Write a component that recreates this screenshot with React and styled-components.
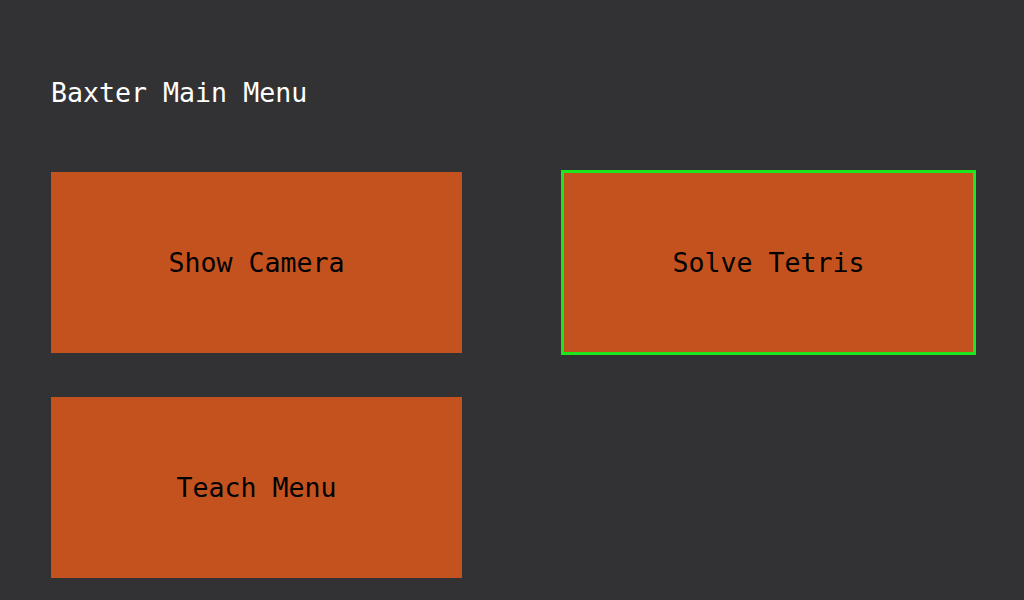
import { createGlobalStyle } from 'styled-components'
import styled from 'styled-components'

const GlobalStyle = createGlobalStyle`
    html, body {
        margin: 0;
        padding: 0;
        background: #323234;
    }
`

const Screen = styled.div`
    width: 1024px;
    height: 600px;
    box-sizing: border-box;
    padding: 80px 50px 0 51px;
    background: #323234;
    font-family: 'DejaVu Sans Mono', 'Liberation Mono', monospace;
    overflow: hidden;
`

const Title = styled.h1`
    margin: 0 0 66px 0;
    font-size: 26.6px;
    line-height: 26px;
    font-weight: normal;
    color: #ffffff;
`

const ButtonGrid = styled.div`
    display: grid;
    grid-template-columns: 411px 411px;
    grid-auto-rows: 181px;
    column-gap: 101px;
    row-gap: 44px;
`

const MenuButton = styled.button`
    display: flex;
    align-items: center;
    justify-content: center;
    border: none;
    margin: 0;
    padding: 0;
    background: #c4521f;
    color: #000000;
    font-family: inherit;
    font-size: 26.6px;
    outline: ${({ $focused }) => ($focused ? '3px solid #1ee61e' : 'none')};
    outline-offset: -1px;
    cursor: pointer;
`

const items = [
    { label: 'Show Camera' },
    { label: 'Solve Tetris', focused: true },
    { label: 'Teach Menu' },
]

export default function App() {
    return (
        <>
            <GlobalStyle />
            <Screen>
                <Title>Baxter Main Menu</Title>
                <ButtonGrid>
                    {items.map((item) => (
                        <MenuButton key={item.label} $focused={item.focused}>
                            {item.label}
                        </MenuButton>
                    ))}
                </ButtonGrid>
            </Screen>
        </>
    )
}
